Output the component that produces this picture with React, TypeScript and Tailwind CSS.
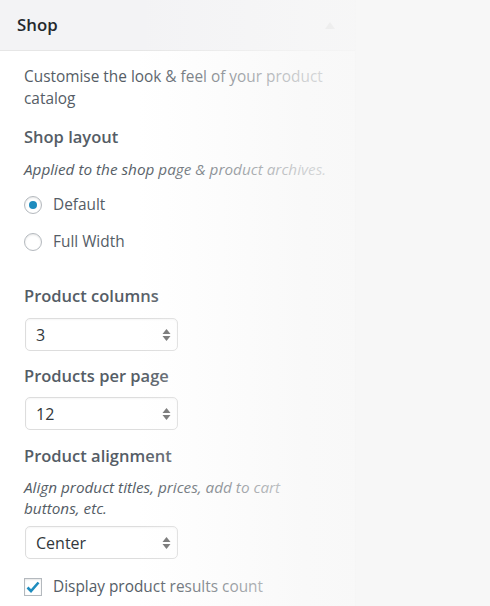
import React from "react";

const SelectBox = ({ value }: { value: string }) => {
  return (
    <div className="ml-px flex items-center justify-between w-[153px] h-[33px] pl-[10px] pr-[6px] bg-white border border-[#dddddd] rounded-[5px] shadow-[inset_0_1px_2px_rgba(0,0,0,0.04)] text-[16px] text-[#32373c]">
      <span>{value}</span>
      <svg width="9" height="14" viewBox="0 0 9 14">
        <path d="M4.5 1 L8.5 6 L0.5 6 Z" fill="#6b6b6b" />
        <path d="M4.5 13 L8.5 8 L0.5 8 Z" fill="#6b6b6b" />
      </svg>
    </div>
  );
};

const Radio = ({ label, checked }: { label: string; checked?: boolean }) => {
  return (
    <label className="flex items-center gap-[11px] h-[20px]">
      <span className="flex items-center justify-center w-[18px] h-[18px] rounded-full border border-[#b4b9be] bg-white shadow-[inset_0_1px_2px_rgba(0,0,0,0.1)]">
        {checked && <span className="w-[8px] h-[8px] rounded-full bg-[#1e8cbe]" />}
      </span>
      <span className="text-[15.4px] text-[#555d66]">{label}</span>
    </label>
  );
};

const App = () => {
  return (
    <div
      className="relative w-[490px] h-[606px] overflow-hidden bg-[#f7f7f7]"
      style={{ fontFamily: '"Open Sans", "Noto Sans", sans-serif' }}
    >
      <div className="w-[356px] h-full bg-white border-r border-[#eeeeee]">
        <div className="flex items-center justify-between h-[51px] pl-[17px] pr-[20px] bg-[#f3f3f5] border-b border-[#e6e6e6]">
          <h2 className="text-[16.8px] font-semibold text-[#23282d]">Shop</h2>
          <svg width="10" height="7" viewBox="0 0 10 7">
            <path d="M5 0 L10 7 L0 7 Z" fill="#c8c8c8" />
          </svg>
        </div>

        <div className="px-[24px] pt-[15px] text-[#555d66]">
          <p className="text-[15.4px] leading-[22px]">
            Customise the look &amp; feel of your product catalog
          </p>

          <h3 className="mt-[16px] text-[16.5px] font-semibold leading-[22px]">Shop layout</h3>
          <p className="mt-[10px] text-[15.3px] italic leading-[22px]">
            Applied to the shop page &amp; product archives.
          </p>
          <div className="mt-[15px] flex flex-col gap-[17px]">
            <Radio label="Default" checked />
            <Radio label="Full Width" />
          </div>

          <h3 className="mt-[33px] text-[16.5px] font-semibold leading-[22px]">Product columns</h3>
          <div className="mt-[11px]">
            <SelectBox value="3" />
          </div>

          <h3 className="mt-[14px] text-[16.5px] font-semibold leading-[22px]">Products per page</h3>
          <div className="mt-[10px]">
            <SelectBox value="12" />
          </div>

          <h3 className="mt-[15px] text-[16.5px] font-semibold leading-[22px]">Product alignment</h3>
          <p className="mt-[10px] w-[300px] text-[15.3px] italic leading-[21px]">
            Align product titles, prices, add to cart buttons, etc.
          </p>
          <div className="mt-[7px]">
            <SelectBox value="Center" />
          </div>

          <label className="mt-[18px] flex items-center gap-[11px] h-[20px]">
            <span className="flex items-center justify-center w-[18px] h-[18px] border border-[#b4b9be] bg-white shadow-[inset_0_1px_2px_rgba(0,0,0,0.1)]">
              <svg width="14" height="12" viewBox="0 0 14 12">
                <path d="M1.5 6.5 L5 10 L12.5 1.5" stroke="#1e8cbe" strokeWidth="2.6" fill="none" />
              </svg>
            </span>
            <span className="text-[15.4px]">Display product results count</span>
          </label>
        </div>
      </div>

      {/* fade over the right side of the panel */}
      <div className="pointer-events-none absolute inset-0 bg-[linear-gradient(to_right,rgba(247,247,247,0)_28%,rgba(247,247,247,0.75)_62%,rgba(247,247,247,0.85)_72%,rgba(247,247,247,0.9)_100%)]" />
    </div>
  );
};

export default App;
